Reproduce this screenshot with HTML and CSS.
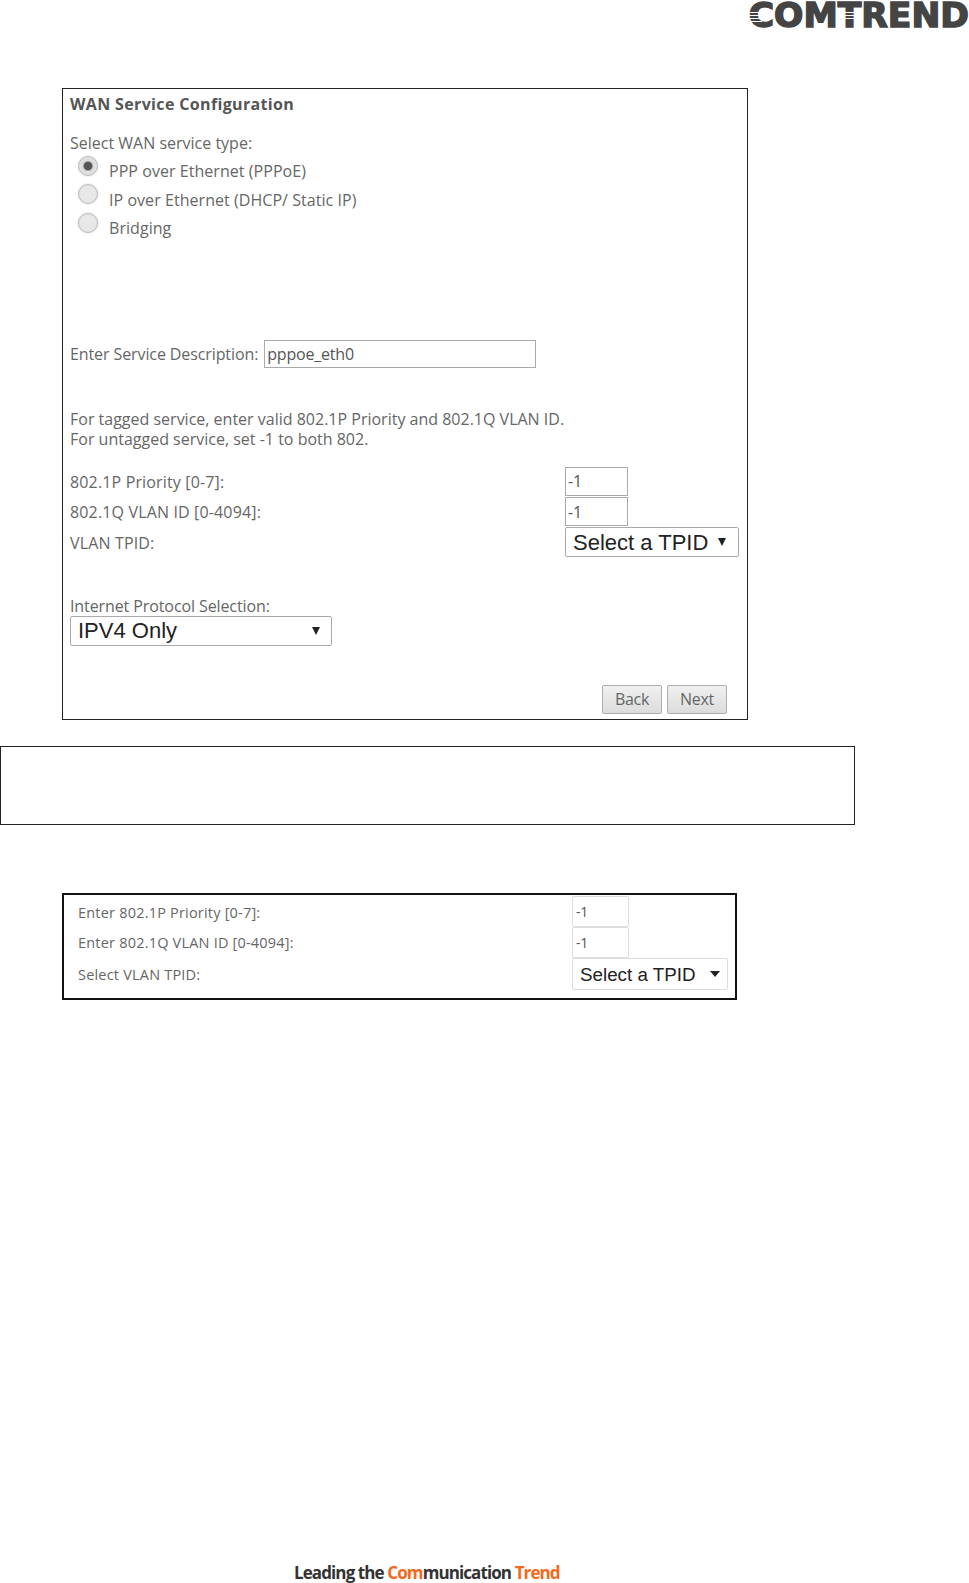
FILE: index.html
```html
<!DOCTYPE html>
<html lang="en">
<head>
<meta charset="utf-8">
<title>WAN Service Configuration</title>
<link rel="stylesheet" href="styles.css">
</head>
<body>
<header class="logo-bar"><span class="logo">COMTREND</span><i class="stripes stripes-c"></i><i class="stripes stripes-t"></i></header>
<main class="content">
  <section class="panel wan">
    <h1 class="title">WAN Service Configuration</h1>
    <p class="line type-label">Select WAN service type:</p>
    <div class="radios">
      <label class="radio"><input type="radio" name="svc" checked><span>PPP over Ethernet (PPPoE)</span></label>
      <label class="radio"><input type="radio" name="svc"><span>IP over Ethernet (DHCP/ Static IP)</span></label>
      <label class="radio"><input type="radio" name="svc"><span>Bridging</span></label>
    </div>
    <div class="desc-row">
      <label class="line">Enter Service Description:</label>
      <input class="field desc" type="text" value="pppoe_eth0">
    </div>
    <p class="line note">For tagged service, enter valid 802.1P Priority and 802.1Q VLAN ID.<br>For untagged service, set -1 to both 802.</p>
    <div class="vlan-grid">
      <span class="line">802.1P Priority [0-7]:</span><input class="field small" type="text" value="-1">
      <span class="line">802.1Q VLAN ID [0-4094]:</span><input class="field small" type="text" value="-1">
      <span class="line">VLAN TPID:</span><div class="select tpid"><select><option>Select a TPID</option></select></div>
    </div>
    <p class="line proto-label">Internet Protocol Selection:</p>
    <div class="select proto"><select><option>IPV4 Only</option></select></div>
    <div class="actions">
      <button class="btn" type="button">Back</button>
      <button class="btn" type="button">Next</button>
    </div>
  </section>
  <div class="empty-box"></div>
  <section class="panel enter">
    <div class="enter-grid">
      <span class="line">Enter 802.1P Priority [0-7]:</span><input class="field small" type="text" value="-1">
      <span class="line">Enter 802.1Q VLAN ID [0-4094]:</span><input class="field small" type="text" value="-1">
      <span class="line">Select VLAN TPID:</span><div class="select tpid2"><select><option>Select a TPID</option></select></div>
    </div>
  </section>
</main>
<footer class="tagline">Leading the <em>Com</em>munication <em>Trend</em></footer>
</body>
</html>
```
FILE: styles.css
```css
* { box-sizing: border-box; }
html, body { margin: 0; padding: 0; background: #fff; }
body {
  width: 969px;
  height: 1583px;
  display: flex;
  flex-direction: column;
  font-family: "Open Sans", "Noto Sans", sans-serif;
  color: #5a5a5a;
  overflow: hidden;
}
.logo-bar {
  position: relative;
  height: 88px;
  display: flex;
  justify-content: flex-end;
  align-items: flex-start;
}
.logo {
  font-family: "DejaVu Sans", sans-serif;
  font-weight: 700;
  font-size: 34px;
  line-height: 30px;
  color: #444;
  -webkit-text-stroke: 1.5px #444;
  display: block;
  white-space: nowrap;
  transform-origin: right top;
  transform: scaleX(1.015);
}
.stripes {
  position: absolute;
  background: repeating-linear-gradient(#fff 0 1px, transparent 1px 3px);
}
.stripes-c { left: 748px; top: 12px; width: 14px; height: 10px; }
.stripes-t { left: 844px; top: 12px; width: 13px; height: 9px; }
.content { display: flex; flex-direction: column; flex: 1; }
.panel { border: 1px solid #222; background: #fff; }
.wan {
  margin-left: 62px;
  width: 686px;
  height: 632px;
  padding: 0 7px;
  display: flex;
  flex-direction: column;
}
.title {
  margin: 5px 0 0;
  font-size: 16px;
  line-height: 20px;
  font-weight: 700;
  letter-spacing: 0.35px;
  color: #555;
}
.line {
  margin: 0;
  font-size: 16px;
  line-height: 20px;
  letter-spacing: 0;
  color: #666;
  white-space: nowrap;
}
.type-label { margin-top: 19px; }
.radios { display: flex; flex-direction: column; margin-top: 8px; margin-left: 8px; gap: 8.5px; }
.radio { display: flex; align-items: center; height: 20px; font-size: 16px; letter-spacing: 0.05px; color: #666; }
.radio span { margin-left: 11px; }
.radio input {
  appearance: none;
  -webkit-appearance: none;
  width: 20px;
  height: 20px;
  margin: -11px 0 0;
  border-radius: 50%;
  border: 1px solid #bdbdbd;
  background: radial-gradient(circle, #e8e8e8 0 55%, #d5d5d5 100%);
  box-shadow: 0 0 2px #ccc;
}
.radio input:checked { background: radial-gradient(circle, #555 0 28%, #ddd 42%, #e4e4e4 100%); }
.desc-row { display: flex; align-items: center; margin-top: 102px; gap: 6px; }
.desc-row .line { letter-spacing: -0.1px; }
.field {
  font-family: "Open Sans", "Noto Sans", sans-serif;
  font-size: 16px;
  color: #555;
  border: 1px solid #aaa;
  background: #fff;
  padding: 0 2px;
  outline: none;
  border-radius: 0;
  letter-spacing: -0.2px;
}
.desc { width: 272px; height: 28px; }
.note { margin-top: 41px; }
.vlan-grid {
  display: grid;
  grid-template-columns: 495px auto;
  grid-auto-rows: 30.5px;
  align-items: center;
  justify-items: start;
  margin-top: 17px;
}
.vlan-grid .line { letter-spacing: 0.15px; padding-top: 1px; }
.small { width: 63px; height: 29px; }
.select { position: relative; display: block; }
.select select {
  appearance: none;
  -webkit-appearance: none;
  width: 100%;
  height: 100%;
  display: block;
  font-family: "Liberation Sans", Arial, sans-serif;
  color: #222;
  background: #fff;
  border: 1px solid #aaa;
  border-radius: 2px;
  padding: 0 0 0 7px;
  outline: none;
}
.select::after {
  content: "";
  position: absolute;
  top: 50%;
  right: 12px;
  margin-top: -4px;
  border-left: 4px solid transparent;
  border-right: 4px solid transparent;
  border-top: 8px solid #222;
}
.tpid { width: 174px; height: 30px; }
.tpid select { font-size: 22px; }
.tpid::after { right: 13px; }
.proto-label { margin-top: 38px; letter-spacing: -0.1px; }
.proto { width: 262px; height: 30px; }
.proto select { font-size: 22px; }
.actions { display: flex; justify-content: flex-end; gap: 5px; margin-top: 39px; padding-right: 13px; }
.btn {
  width: 60px;
  height: 29px;
  font-family: "Open Sans", "Noto Sans", sans-serif;
  font-size: 16px;
  letter-spacing: -0.3px;
  color: #666;
  background: linear-gradient(#f0f0f0, #dcdcdc);
  border: 1px solid #adadad;
  border-radius: 2px;
  padding: 0;
}
.empty-box {
  width: 855px;
  height: 79px;
  margin-top: 26px;
  border: 1px solid #222;
}
.enter {
  margin-top: 68px;
  margin-left: 62px;
  width: 675px;
  height: 107px;
  border: 2px solid #111;
}
.enter-grid {
  display: grid;
  grid-template-columns: 494px auto;
  grid-template-rows: 31px 30px 33px;
  align-items: center;
  justify-items: start;
  padding: 1px 0 0 14px;
}
.enter .line { font-size: 14.5px; letter-spacing: 0.2px; padding-top: 2px; }
.enter .small { width: 57px; height: 31px; border-color: #ddd; border-radius: 2px; font-size: 14px; padding-left: 3px; }
.tpid2 { width: 156px; height: 32px; }
.tpid2 select { font-size: 18.8px; border-color: #ddd; padding-top: 2px; }
.tpid2::after {
  right: 8px;
  margin-top: -3px;
  border-left-width: 5px;
  border-right-width: 5px;
  border-top-width: 6px;
}
.tagline {
  height: 21px;
  margin-top: auto;
  padding-left: 294px;
  font-family: "Open Sans", "Noto Sans", sans-serif;
  font-weight: 700;
  font-size: 17px;
  line-height: 22px;
  letter-spacing: -0.9px;
  color: #333;
}
.tagline em { font-style: normal; color: #f26a21; }
```
